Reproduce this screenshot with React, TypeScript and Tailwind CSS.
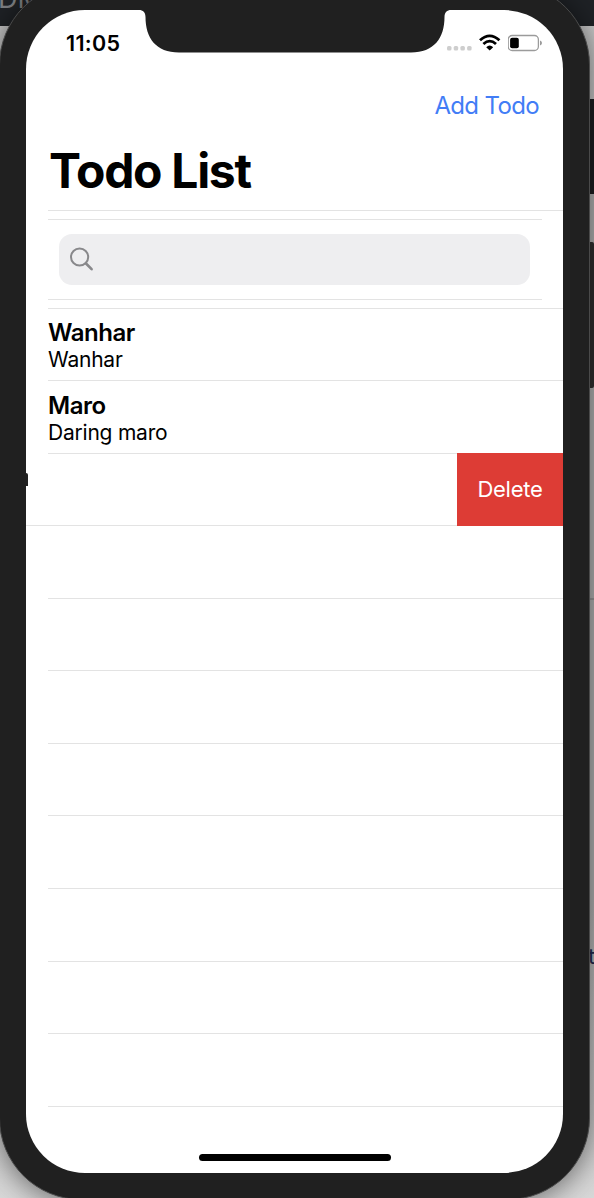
const todos = [
  { title: "Wanhar", detail: "Wanhar" },
  { title: "Maro", detail: "Daring maro" },
];

function Backdrop() {
  return (
    <div className="absolute inset-0 flex flex-col overflow-hidden bg-[#a3a3a3]">
      <div className="h-[26px] bg-[#1f2226] text-[27px] leading-[26px] text-[#808285]">
        <span className="relative -top-[14px] -left-[2px]">DM</span>
      </div>
      <div className="h-[73px] bg-[#c8c8c8]" />
      <div className="h-[95px] bg-[#1c1e21]" />
      <div className="h-[404px] bg-[#b4b4b4]" />
      <div className="h-[2px] bg-[#999999]" />
      <div className="flex-1 bg-gradient-to-b from-[#b4b4b4] via-[#b4b4b4] to-[#d8d8d8]" />
      <span className="absolute top-[940px] left-[588px] text-[22px] text-[#1f2a50]">t</span>
    </div>
  );
}

function Notch() {
  return (
    <svg className="absolute top-0 left-[109px]" width="320" height="43" viewBox="0 0 320 43" fill="#202020">
      <path d="M0 -1V0H4C8 0 10.500 2.500 10.500 7C10.500 28 21 42.500 44 42.500H276C299 42.500 309.500 28 309.500 7C309.500 2.500 312 0 316 0H320V-1Z" />
    </svg>
  );
}

function StatusBar() {
  return (
    <div className="flex h-[66px] justify-between pr-[19px] pl-[40px]">
      <span className="pt-[19px] text-[21.500px] leading-[28px] font-semibold tracking-[0.300px]">11:05</span>
      <div className="flex pt-[24px]">
        <svg className="mt-[12px]" width="25" height="5" viewBox="0 0 25 5" fill="#cecece">
          <rect x="0" width="4.500" height="4.500" rx="1.500" />
          <rect x="6.700" width="4.500" height="4.500" rx="1.500" />
          <rect x="13.400" width="4.500" height="4.500" rx="1.500" />
          <rect x="20.100" width="4.500" height="4.500" rx="1.500" />
        </svg>
        <svg className="ml-[7px]" width="22" height="17" viewBox="0 0 22 17" fill="none" stroke="#000" strokeWidth="2.800">
          <path d="M1 6.300Q10.700 -2.600 20.400 6.300" />
          <path d="M4.400 10Q10.700 4.200 17 10" />
          <path d="M7.200 13.200Q10.700 9.800 14.200 13.200L10.700 16.400Z" fill="#000" stroke="none" />
        </svg>
        <svg className="ml-[7px]" width="36" height="18" viewBox="0 0 36 18" fill="none">
          <rect x="0.200" y="1.500" width="30.200" height="15" rx="4" stroke="#9b9b9b" strokeWidth="1.300" />
          <rect x="2.100" y="3.800" width="8.700" height="10.500" rx="2" fill="#000" />
          <path d="M32 6.500Q34 7.300 34 9Q34 10.700 32 11.500Z" fill="#9b9b9b" />
        </svg>
      </div>
    </div>
  );
}

function SearchRow() {
  return (
    <div className="mr-[21px] ml-[22px] flex h-[81px] shrink-0 border-y border-[#e3e3e3] pt-[14px] pr-[12px] pl-[11px]">
      <div className="flex h-[51px] w-full rounded-[13px] bg-[#eeeef0] pl-[10px]">
        <svg className="mt-[12px]" width="26" height="26" viewBox="0 0 26 26" fill="none" stroke="#88888b">
          <circle cx="10.600" cy="11" r="8.600" strokeWidth="2" />
          <path d="M17 17.500L22.600 23.200" strokeWidth="2.600" strokeLinecap="round" />
        </svg>
      </div>
    </div>
  );
}

function TodoRow({ title, detail }: { title: string; detail: string }) {
  return (
    <div className="ml-[22px] flex h-[72.560px] shrink-0 flex-col border-b border-[#e3e3e3] pt-[9.400px]">
      <span className="text-[24px] leading-[29px] font-semibold tracking-[-0.450px]">{title}</span>
      <span className="text-[21px] leading-[26px] tracking-[-0.220px]">{detail}</span>
    </div>
  );
}

function SwipedRow() {
  return (
    <div className="flex h-[72.560px] shrink-0">
      <div className="flex flex-1 border-b border-[#e3e3e3] pt-[19px]">
        <i className="h-[13px] w-[2px] rounded-tr-[2px] bg-[#222]" />
      </div>
      <button className="-mt-px w-[106px] bg-[#dd3c35] text-[22px] tracking-[-0.250px] text-white">Delete</button>
    </div>
  );
}

export default function App() {
  return (
    <div className="relative h-[1198px] w-[594px] overflow-hidden font-['Inter',sans-serif] text-black">
      <Backdrop />
      <div className="absolute top-[242px] left-[587px] h-[146px] w-[7px] rounded-[2px] bg-[#303030]" />
      <div className="absolute -top-[17px] -left-px h-[1217px] w-[591px] rounded-[82px] border border-[#4a4a4a] bg-[#202020] p-[26px] shadow-[0_2px_30px_rgba(0,0,0,0.55)]">
        <div className="relative flex h-[1163px] w-[537px] flex-col overflow-hidden rounded-[59px] bg-white">
          <StatusBar />
          <header className="flex h-[134px] shrink-0 flex-col">
            <button className="mt-[14px] mr-[24px] self-end text-[24px] leading-[31px] tracking-[-0.650px] text-[#427df6]">Add Todo</button>
            <h1 className="mt-[21px] ml-[23px] text-[48px] leading-[58px] font-bold tracking-[-1.300px]">Todo List</h1>
          </header>
          <div className="ml-[22px] h-[9px] shrink-0 border-t border-[#e3e3e3]" />
          <SearchRow />
          <div className="mt-[7.600px] ml-[22px] h-px shrink-0 border-t border-[#e3e3e3]" />
          {todos.map((todo) => (
            <TodoRow key={todo.title} title={todo.title} detail={todo.detail} />
          ))}
          <SwipedRow />
          {Array.from({ length: 8 }, (_, i) => (
            <div key={i} className="ml-[22px] h-[72.560px] shrink-0 border-b border-[#e3e3e3]" />
          ))}
          <Notch />
          <div className="absolute bottom-[12px] left-[173px] h-[7px] w-[192px] rounded-full bg-black" />
        </div>
      </div>
    </div>
  );
}
